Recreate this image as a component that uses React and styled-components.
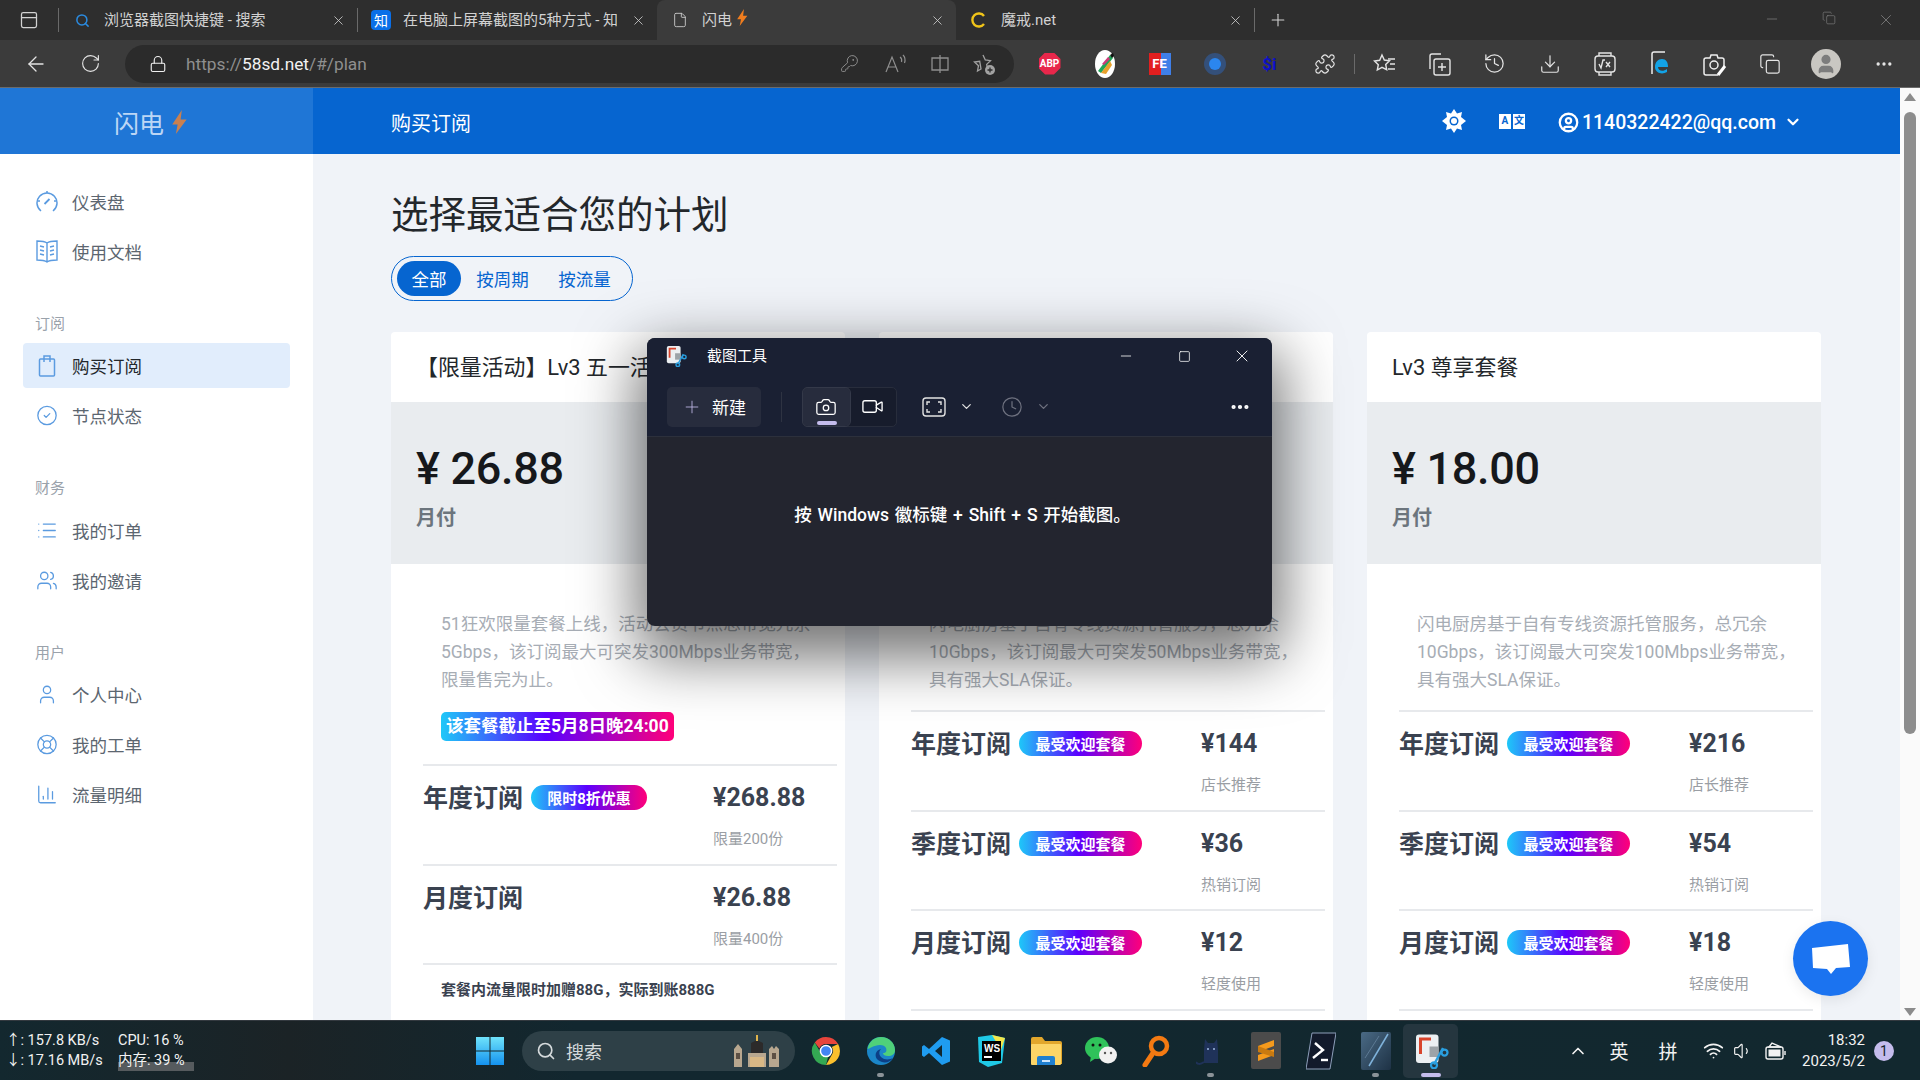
import React from 'react'
import styled, { createGlobalStyle } from 'styled-components'
import {
  ArrowLeft, RotateCw, Lock, KeyRound, Puzzle, History, Download, Ellipsis, Copy, Plus, X, Minus,
  Camera, Video, Clock, ChevronDown, ChevronUp, CircleUser, Search, Wifi, Volume1, File, Square,
  CircleCheck, List, Users, User, LifeBuoy, ChartColumn, PanelTop, Copy as Restore
} from 'lucide-react'

const FONT = `Roboto, "Noto Sans CJK SC", sans-serif`

const GlobalStyle = createGlobalStyle`
  html, body { margin: 0; padding: 0; background: #f0f3f8; }
  * { box-sizing: border-box; }
  body { font-family: ${FONT}; }
`

const Screen = styled.div`
  position: relative;
  width: 1920px;
  height: 1080px;
  overflow: hidden;
  display: flex;
  flex-direction: column;
`

/* browser chrome */
const TabBar = styled.div`
  height: 40px;
  flex: none;
  display: flex;
  align-items: center;
  background: #2e2e2e;
  color: #d2d2d2;
`
const TabMenu = styled.div`
  width: 59px;
  height: 24px;
  display: flex;
  align-items: center;
  justify-content: center;
  border-right: 1px solid #6a6a6a;
`
const Tab = styled.div`
  width: 299px;
  height: ${p => (p.$active ? '40px' : '24px')};
  padding: 0 11px 0 15px;
  display: flex;
  align-items: center;
  gap: 14px;
  font-size: 15px;
  background: ${p => (p.$active ? '#3b3b3b' : 'transparent')};
  border-radius: ${p => (p.$active ? '8px 8px 0 0' : '0')};
  border-right: ${p => (p.$active || p.$bare ? 'none' : '1px solid #6a6a6a')};
`
const TabIcon = styled.span`
  width: 16px;
  height: 16px;
  flex: none;
  display: flex;
  align-items: center;
  justify-content: center;
`
const ZhihuMark = styled(TabIcon)`
  width: 20px;
  height: 20px;
  margin-left: -2px;
  margin-right: -2px;
  background: #0a6fe8;
  border-radius: 4px;
  color: #fff;
  font-size: 14px;
`
const TabTitle = styled.span`
  flex: 1;
  min-width: 0;
  height: 22px;
  line-height: 22px;
  overflow: hidden;
  white-space: nowrap;
  display: flex;
  align-items: flex-start;
  gap: 5px;
`
const NewTab = styled.div`
  width: 46px;
  display: flex;
  justify-content: center;
`
const WindowButtons = styled.div`
  margin-left: auto;
  display: flex;
  color: #8a8a8a;
  padding-right: 6px;
`
const WindowButton = styled.div`
  width: 57px;
  display: flex;
  justify-content: center;
`
const ToolBar = styled.div`
  height: 48px;
  flex: none;
  display: flex;
  align-items: center;
  padding-left: 8px;
  background: #3b3b3b;
  border-bottom: 1px solid #6b6b6b;
  color: #e4e4e4;
`
const ToolCell = styled.div`
  width: ${p => p.$w || 55}px;
  height: 38px;
  flex: none;
  display: flex;
  align-items: center;
  justify-content: center;
`
const ToolDivider = styled.div`
  width: 1px;
  height: 20px;
  margin: 0 2px;
  flex: none;
  background: #6a6a6a;
`
const Address = styled.div`
  width: 889px;
  height: 38px;
  margin: 0 8px 0 7px;
  padding: 0 7px 0 24px;
  flex: none;
  display: flex;
  align-items: center;
  border-radius: 19px;
  background: #2b2b2b;
  color: #8f8f8f;
`
const Url = styled.div`
  flex: 1;
  margin-left: 19px;
  font-size: 17.3px;
  b { font-weight: 400; color: #f2f2f2; }
`
const Badge = styled.span`
  width: 22px;
  height: 22px;
  display: flex;
  align-items: center;
  justify-content: center;
  font-size: ${p => p.$size || 10}px;
  font-weight: 700;
  color: ${p => p.$color || '#fff'};
  background: ${p => p.$bg || 'transparent'};
  border-radius: ${p => p.$radius || '0'};
  clip-path: ${p => p.$clip || 'none'};
`
const BlueDot = styled.span`
  width: 12px;
  height: 12px;
  border-radius: 50%;
  background: #2b86ee;
`
const Avatar = styled.div`
  width: 30px;
  height: 30px;
  border-radius: 50%;
  background: #c9c7c2;
  color: #7d7d7d;
  display: flex;
  align-items: center;
  justify-content: center;
`

/* site */
const Viewport = styled.div`
  flex: 1;
  min-height: 0;
  display: flex;
`
const PageColumn = styled.div`
  position: relative;
  flex: 1;
  min-width: 0;
  display: flex;
  flex-direction: column;
`
const Header = styled.header`
  height: 66px;
  flex: none;
  display: flex;
  align-items: center;
  background: #0665d0;
  color: #fff;
`
const Brand = styled.div`
  width: 313px;
  height: 100%;
  padding: 2px 0 0 114px;
  display: flex;
  align-items: center;
  gap: 8px;
  background: #1f76d6;
  color: #bcd6f5;
  font-size: 25px;
`
const HeaderTitle = styled.div`
  margin-left: 78px;
  padding-top: 2px;
  font-size: 20px;
`
const HeaderTools = styled.div`
  margin-left: auto;
  padding-right: 98px;
  display: flex;
  align-items: center;
`
const HeaderIcon = styled.div`
  width: 58px;
  display: flex;
  justify-content: center;
`
const LangMark = styled.span`
  width: 26px;
  height: 15px;
  display: grid;
  grid-template-columns: 1fr 1fr;
  column-gap: 2px;
`
const LangCell = styled.span`
  display: flex;
  align-items: center;
  justify-content: center;
  background: #fff;
  color: #0665d0;
  font-size: 10px;
  font-weight: 700;
  line-height: 1;
`
const Account = styled.div`
  display: flex;
  align-items: center;
  gap: 3px;
  margin-left: 17px;
  padding-top: 2px;
  font-size: 19.5px;
  font-weight: 500;
`
const AccountCaret = styled.span`
  display: flex;
  margin-left: 5px;
`
const Body = styled.div`
  flex: 1;
  min-height: 0;
  display: flex;
`
const Sidebar = styled.nav`
  width: 313px;
  flex: none;
  padding: 24.5px 23px 0;
  background: #fff;
`
const NavItem = styled.div`
  height: 45px;
  margin-bottom: 5px;
  padding-left: 13px;
  display: flex;
  align-items: center;
  gap: 14px;
  border-radius: 4px;
  font-size: 17.5px;
  color: ${p => (p.$active ? '#23272b' : '#5c6670')};
  background: ${p => (p.$active ? '#e1edfc' : 'transparent')};
`
const NavIcon = styled.span`
  width: 22px;
  height: 24px;
  flex: none;
  display: flex;
  align-items: center;
  justify-content: center;
  color: #5b9be0;
`
const NavLabel = styled.div`
  height: 23px;
  margin: 39px 0 7.5px 12px;
  font-size: 15px;
  line-height: 23px;
  color: #9aa2ab;
`
const Main = styled.main`
  flex: 1;
  min-width: 0;
  padding: 35px 0 0 78px;
  overflow: hidden;
  background: #f0f3f8;
`
const PageTitle = styled.h1`
  margin: 0;
  height: 52px;
  font-size: 37.5px;
  line-height: 52px;
  font-weight: 400;
  color: #23272b;
`
const Segmented = styled.div`
  width: 242px;
  height: 45px;
  margin-top: 15px;
  padding: 0 5px;
  display: flex;
  align-items: center;
  border: 1px solid #0665d0;
  border-radius: 23px;
`
const Segment = styled.div`
  width: ${p => (p.$active ? 64 : 83)}px;
  height: 35px;
  margin-right: ${p => (p.$active ? 0 : -1)}px;
  display: flex;
  align-items: center;
  justify-content: center;
  border-radius: 18px;
  font-size: 17.5px;
  color: ${p => (p.$active ? '#fff' : '#0665d0')};
  background: ${p => (p.$active ? '#0665d0' : 'transparent')};
`
const Cards = styled.div`
  margin-top: 31px;
  display: grid;
  grid-template-columns: repeat(3, 454px);
  column-gap: 34px;
`
const Card = styled.article`
  background: #fff;
  border-radius: 4px;
`
const CardTitle = styled.div`
  height: 70px;
  padding: 0 0 3px 25px;
  display: flex;
  align-items: center;
  font-size: 21.9px;
  color: #23272b;
`
const PriceBlock = styled.div`
  height: 162px;
  padding: 33px 25px 0;
  background: #e9ecef;
`
const BigPrice = styled.div`
  font-size: 45px;
  line-height: 68px;
  font-weight: 500;
  letter-spacing: -.3px;
  color: #16181b;
`
const Cycle = styled.div`
  font-size: 20px;
  line-height: 30px;
  font-weight: 700;
  color: #6c757d;
`
const CardBody = styled.div`
  padding: 46px 8px 60px 32px;
`
const Desc = styled.p`
  margin: 0 0 0 18px;
  font-size: 17.5px;
  line-height: 28px;
  color: #a7adb5;
`
const Deadline = styled.div`
  display: inline-block;
  margin: 18px 0 0 18px;
  padding: 0 5px;
  height: 29px;
  line-height: 29px;
  border-radius: 5px;
  font-size: 17.5px;
  font-weight: 700;
  white-space: nowrap;
  color: #fff;
  background: linear-gradient(90deg, #1ec8f8, #5a00ff 45%, #ff007a);
`
const Plans = styled.div`
  margin-top: ${p => p.$gap}px;
  border-bottom: 2px solid #e7e9ec;
`
const PlanRow = styled.div`
  height: 99.7px;
  padding-top: 14px;
  display: grid;
  grid-template-columns: 290px 1fr;
  border-top: 2px solid #e7e9ec;
`
const PlanName = styled.div`
  height: 35px;
  display: flex;
  align-items: center;
  gap: 8px;
  font-size: 25px;
  font-weight: 700;
  color: #3a4250;
`
const PlanNameText = styled.span`
  margin-top: -3px;
`
const Tag = styled.span`
  height: 25px;
  width: ${p => p.$w || 123}px;
  display: flex;
  align-items: center;
  justify-content: center;
  border-radius: 13px;
  font-size: 15px;
  font-weight: 700;
  color: #fff;
  background: linear-gradient(90deg, #1ec8f8, #5a00ff 48%, #ff007a);
`
const PlanPrice = styled.div`
  height: 35px;
  line-height: 35px;
  font-size: 25px;
  font-weight: 700;
  color: #3a4250;
`
const PlanSub = styled.div`
  margin-top: 12px;
  font-size: 15px;
  line-height: 25px;
  color: #9a9ea4;
`
const Note = styled.div`
  margin-left: 18px;
  padding-top: 14px;
  font-size: 15px;
  line-height: 22px;
  font-weight: 700;
  color: #3a4250;
`
const ChatButton = styled.div`
  position: absolute;
  right: 32px;
  bottom: 24px;
  width: 75px;
  height: 75px;
  border-radius: 50%;
  display: flex;
  align-items: center;
  justify-content: center;
  background: #1b73f0;
  box-shadow: 0 4px 14px rgba(0, 0, 0, .08);
`
const Scrollbar = styled.div`
  position: relative;
  width: 20px;
  flex: none;
  padding-top: 24px;
  display: flex;
  justify-content: center;
  background: #fafafa;
`
const ScrollThumb = styled.div`
  width: 12px;
  height: 622px;
  border-radius: 6px;
  background: #8c8c8c;
`
const ScrollArrow = styled.div`
  position: absolute;
  left: 4px;
  width: 0;
  height: 0;
  border-left: 6px solid transparent;
  border-right: 6px solid transparent;
  ${p => (p.$down
    ? 'bottom: 4px; border-top: 8px solid #8c8c8c;'
    : 'top: 5px; border-bottom: 8px solid #8c8c8c;')}
`

/* snipping tool */
const SnipWindow = styled.section`
  position: absolute;
  left: 647px;
  top: 338px;
  width: 625px;
  height: 288px;
  border-radius: 8px;
  display: flex;
  flex-direction: column;
  color: #fff;
  background: #23252f;
  box-shadow: 0 22px 60px 10px rgba(0, 0, 0, .55);
`
const SnipTitleBar = styled.div`
  height: 36px;
  flex: none;
  display: flex;
  align-items: center;
  padding-left: 18px;
  border-radius: 8px 8px 0 0;
  background: #1a2033;
  font-size: 15px;
`
const SnipTitle = styled.span`
  margin-left: 20px;
  padding-bottom: 3px;
`
const SnipControls = styled.div`
  margin-left: auto;
  display: flex;
  padding-right: 1px;
`
const SnipControl = styled.div`
  width: 58px;
  display: flex;
  align-items: center;
  justify-content: center;
`
const SnipTools = styled.div`
  height: 63px;
  flex: none;
  padding: 13px 20px 10px;
  display: flex;
  align-items: center;
  background: #1a2033;
  border-bottom: 1px solid #2c303c;
`
const NewButton = styled.div`
  width: 94px;
  height: 40px;
  display: flex;
  align-items: center;
  justify-content: center;
  gap: 10px;
  border-radius: 5px;
  background: #272c3d;
  font-size: 17px;
`
const SnipDivider = styled.div`
  width: 1px;
  height: 30px;
  margin: 0 20px;
  background: #2e3342;
`
const ModeSwitch = styled.div`
  width: 95px;
  height: 40px;
  display: flex;
  border: 1px solid #282d3c;
  border-radius: 5px;
  background: #171c2c;
`
const Mode = styled.div`
  position: relative;
  width: 47px;
  display: flex;
  align-items: center;
  justify-content: center;
  border-radius: 5px;
  background: ${p => (p.$active ? '#272c3d' : 'transparent')};
  outline: ${p => (p.$active ? '1px solid #343949' : 'none')};
`
const ModeMark = styled.span`
  position: absolute;
  left: 14px;
  bottom: 1px;
  width: 20px;
  height: 4px;
  border-radius: 2px;
  background: #c4bcec;
`
const SnipPicker = styled.div`
  margin-left: ${p => p.$m}px;
  display: flex;
  align-items: center;
  gap: ${p => p.$gap}px;
  color: ${p => (p.$dim ? '#6f7280' : '#e2e2e2')};
`
const SnipMore = styled.div`
  margin-left: auto;
  margin-right: 1px;
  display: flex;
`
const SnipMessage = styled.div`
  padding: 64px 0 0 6px;
  text-align: center;
  font-size: 17.5px;
  line-height: 28px;
  font-weight: 500;
  word-spacing: 1.5px;
`

/* windows taskbar */
const Taskbar = styled.footer`
  height: 60px;
  flex: none;
  display: flex;
  align-items: center;
  border-top: 1px solid #33393f;
  background: linear-gradient(90deg, #13282f 0%, #1b2326 15%, #12272f 30%, #12282f 100%);
  color: #f2f2f2;
`
const Stats = styled.div`
  width: 462px;
  flex: none;
  padding-left: 6px;
  display: grid;
  grid-template-columns: 112px 76px;
  grid-auto-rows: 20px;
  font-size: 14.5px;
  line-height: 20px;
  white-space: nowrap;
`
const MemStat = styled.span`
  background: linear-gradient(180deg, transparent 55%, #565b5e 55%);
`
const TaskCell = styled.div`
  position: relative;
  width: 55px;
  height: 54px;
  flex: none;
  display: flex;
  align-items: center;
  justify-content: center;
  border-radius: 5px;
  background: ${p => (p.$active ? '#25363f' : 'transparent')};
`
const RunDot = styled.span`
  position: absolute;
  bottom: 1px;
  left: 50%;
  width: ${p => (p.$active ? 20 : 7)}px;
  height: 4px;
  margin-left: ${p => (p.$active ? -10 : -3.5)}px;
  border-radius: 2px;
  background: ${p => (p.$active ? '#c4bcec' : '#8b9398')};
`
const SearchBox = styled.div`
  width: 273px;
  height: 40px;
  margin: 0 3px 0 5px;
  padding: 0 10px 0 14px;
  flex: none;
  display: flex;
  align-items: center;
  gap: 10px;
  border-radius: 20px;
  background: #2e4047;
  font-size: 18px;
  color: #d5dadc;
`
const SearchArt = styled.span`
  margin-left: auto;
  display: flex;
`
const Tray = styled.div`
  flex: 1;
  display: flex;
  align-items: center;
  padding-left: 110px;
`
const TrayCell = styled.div`
  width: ${p => p.$w}px;
  margin-right: ${p => p.$m || 0}px;
  display: flex;
  justify-content: center;
  font-size: 19px;
`
const SysClock = styled.div`
  width: 76px;
  margin-left: 3px;
  text-align: right;
  font-size: 15px;
  line-height: 21px;
`
const Notice = styled.div`
  width: 20px;
  height: 20px;
  margin-left: 9px;
  display: flex;
  align-items: center;
  justify-content: center;
  border-radius: 50%;
  background: #c4bcec;
  color: #17242b;
  font-size: 14px;
`

const Bolt = ({ size = 20, color = '#f07d1e' }) => (
  <svg width={size * 0.62} height={size} viewBox="0 0 12 20"><path d="M8 0 0 12h4.500L3 20l9-12H7z" fill={color} /></svg>
)
const SnipLogo = ({ size = 22 }) => (
  <svg width={size} height={size} viewBox="0 0 24 24">
    <rect x="2" y="1" width="15" height="19" rx="2" fill="#eceff2" />
    <path d="M4 3h8v2H6v9H4z" fill="#d8442c" />
    <rect x="11" y="9" width="6" height="7" fill="#9da3a8" />
    <path d="m14 21 6-11" stroke="#2a9fe0" strokeWidth="1.6" />
    <circle cx="14" cy="21.5" r="2" fill="none" stroke="#2a9fe0" strokeWidth="1.5" />
    <circle cx="21" cy="13" r="2" fill="none" stroke="#2a9fe0" strokeWidth="1.5" />
  </svg>
)
const WinLogo = () => (
  <svg width="30" height="30" viewBox="0 0 30 30">
    <defs><linearGradient id="w" x1="0" y1="0" x2="0" y2="1"><stop offset="0" stopColor="#6fe3fb" /><stop offset="1" stopColor="#1492ef" /></linearGradient></defs>
    <path d="M1 1h13.5v13.5H1zM15.5 1H29v13.5H15.5zM1 15.5h13.5V29H1zM15.5 15.5H29V29H15.5z" fill="url(#w)" />
  </svg>
)
const ChromeLogo = () => (
  <svg width="30" height="30" viewBox="0 0 30 30">
    <path d="M15 1a14 14 0 0 1 12.1 7H15a7 7 0 0 0-6.6 4.6L3.8 6.5A14 14 0 0 1 15 1z" fill="#e8453c" />
    <path d="M27.1 8A14 14 0 0 1 15 29l6-10.4a7 7 0 0 0-.2-7.6z" fill="#fbc02d" />
    <path d="M15 29A14 14 0 0 1 3.8 6.5L9.7 17a7 7 0 0 0 7.5 3.5z" fill="#34a853" />
    <circle cx="15" cy="15" r="5.6" fill="#4285f4" stroke="#fff" strokeWidth="1.5" />
  </svg>
)
const EdgeLogo = ({ size = 30 }) => (
  <svg width={size} height={size} viewBox="0 0 30 30">
    <circle cx="15" cy="15" r="14" fill="#1b86c8" />
    <path d="M1.5 13C3 5 9 1 15 1c8 0 14 6 14 13 0 4-3 6-7 6-3 0-5-1-5-3 3 0 4-2 3-5-1-2-3-3-6-3-6 0-11 4-12.5 4z" fill="#4fd07a" />
    <path d="M12 24c-4-3-3-10 3-11-3 3-2 8 3 10 4 1 7 0 9-1-3 5-10 6-15 2z" fill="#0c3f86" />
  </svg>
)
const VSCodeLogo = () => (
  <svg width="30" height="30" viewBox="0 0 30 30">
    <path d="M21 1 29 4.500v21L21 29 8 17l-5 4-2-1.500V10.500L3 9l5 4zM21 9l-7 6 7 6z" fill="#1f9cf0" />
  </svg>
)
const WSLogo = () => (
  <svg width="30" height="32" viewBox="0 0 30 32">
    <path d="M2 2 16 0l13 3-3 25-14 4L3 27z" fill="#1fc9e6" />
    <path d="M16 0l13 3-4 12z" fill="#f4e64a" />
    <rect x="6" y="6" width="19" height="20" fill="#000" />
    <text x="8" y="17" fill="#fff" fontSize="10" fontWeight="700" fontFamily="Liberation Sans">WS</text>
    <rect x="8" y="21" width="8" height="2" fill="#fff" />
  </svg>
)
const FolderLogo = () => (
  <svg width="32" height="30" viewBox="0 0 32 30">
    <path d="M1 3a2 2 0 0 1 2-2h9l3 4h15a2 2 0 0 1 2 2v21H1z" fill="#e2a72c" />
    <rect x="1" y="8" width="30" height="21" rx="1" fill="#fcd567" />
    <path d="M9 20h14a2 2 0 0 1 2 2v7H7v-7a2 2 0 0 1 2-2z" fill="#1f80d0" />
    <rect x="12" y="24" width="8" height="2" fill="#cde7ff" />
  </svg>
)
const WeChatLogo = () => (
  <svg width="32" height="30" viewBox="0 0 32 30">
    <ellipse cx="12" cy="12" rx="12" ry="11" fill="#2fc25a" />
    <path d="M6 20 5 26l6-4z" fill="#2fc25a" />
    <ellipse cx="23" cy="19" rx="9" ry="8.500" fill="#f1f1f1" />
    <circle cx="8" cy="9" r="1.500" fill="#111" /><circle cx="15" cy="9" r="1.500" fill="#111" />
    <circle cx="20" cy="17" r="1.200" fill="#555" /><circle cx="26" cy="17" r="1.200" fill="#555" />
  </svg>
)
const OrangeSearch = () => (
  <svg width="30" height="32" viewBox="0 0 30 32" fill="none">
    <circle cx="18" cy="11" r="8" stroke="#f47a12" strokeWidth="4.500" />
    <path d="M12 18 4 30" stroke="#f47a12" strokeWidth="5" strokeLinecap="round" />
  </svg>
)
const CatLogo = () => (
  <svg width="30" height="32" viewBox="0 0 30 32">
    <path d="M9 4l3 4h6l3-4 1 10v14H8V14z" fill="#1f3259" />
    <path d="M8 27C4 30 1 29 0 27" stroke="#1f3259" strokeWidth="2" fill="none" />
    <circle cx="12" cy="14" r="1" fill="#9fb8e0" /><circle cx="18" cy="14" r="1" fill="#9fb8e0" />
  </svg>
)
const SublimeLogo = () => (
  <svg width="30" height="37" viewBox="0 0 30 37">
    <rect width="30" height="37" rx="2" fill="#4b4b4b" />
    <path d="M7 14 23 8v6L7 20zM23 17 7 23v6l16-6z" fill="#f59a1c" />
    <path d="M7 14 23 20v5L7 20z" fill="#c97a10" />
  </svg>
)
const TermLogo = () => (
  <svg width="30" height="38" viewBox="0 0 30 38">
    <path d="M6 1h24l-6 36H0z" fill="#121a2b" stroke="#8ea0bb" />
    <path d="m9 11 8 7-10 8" stroke="#fff" strokeWidth="2.400" fill="none" />
    <path d="M15 28h7" stroke="#fff" strokeWidth="2.400" />
  </svg>
)
const PictureLogo = () => (
  <svg width="30" height="38" viewBox="0 0 30 38">
    <defs><linearGradient id="p" x1="0" y1="0" x2="1" y2="1"><stop offset="0" stopColor="#4a6a85" /><stop offset="1" stopColor="#1e3245" /></linearGradient></defs>
    <rect width="30" height="38" rx="2" fill="url(#p)" />
    <path d="M27 2 8 34" stroke="#7fb2da" strokeWidth="1.500" />
    <path d="M18 4 4 26" stroke="#5d7a94" strokeWidth="1" />
  </svg>
)
const CityArt = () => (
  <svg width="54" height="32" viewBox="0 0 54 32">
    <path d="M3 32V14l4-5 4 5v18zM17 32V18h18v14zM38 32V14l3-3 2 3 2-3 3 3v18z" fill="#b8a78f" />
    <path d="M20 18V8l6-3 6 3v10z" fill="#2c2a2a" />
    <path d="M26 0v6" stroke="#e0b44c" strokeWidth="2" />
    <path d="M19 22h14v10H19z" fill="#d9b885" />
    <path d="M5 18h4v6H5zM41 18h4v6h-4z" fill="#5d5044" />
  </svg>
)
const PaintLogo = () => (
  <svg width="22" height="30" viewBox="0 0 22 30">
    <ellipse cx="11" cy="15" rx="10" ry="14" fill="#fff" />
    <path d="M4 22 16 6l3 3L7 24z" fill="#22a559" />
    <path d="M7 24 16 12l2 4-6 9z" fill="#e8a12d" />
    <path d="M8 15 14 8l2 2-6 6z" fill="#d03a7b" />
    <path d="M16 6l3-2 1 3-2 2z" fill="#111" />
  </svg>
)
const LinkedEdge = () => (
  <svg width="24" height="28" viewBox="0 0 24 28" fill="none">
    <path d="M4 24V4a2 2 0 0 1 2-2h11" stroke="#eee" strokeWidth="1.500" />
    <path d="M7 17c0-5 3-8 7-8s6 3 6 8H10c0 4 5 5 9 2v3c-5 3-12 1-12-5z" fill="#13a3e6" />
  </svg>
)
const SnipCamera = () => (
  <svg width="24" height="26" viewBox="0 0 24 26" fill="none" stroke="#eee" strokeWidth="1.500">
    <path d="M3 7h4l1-3h6l1 3h4a2 2 0 0 1 2 2v6M15 24H3a2 2 0 0 1-2-2V9a2 2 0 0 1 2-2" />
    <circle cx="11" cy="14" r="4" />
    <path d="m15 24 7-9" stroke="#fff" strokeWidth="3" />
  </svg>
)
const WatchFx = () => (
  <svg width="24" height="26" viewBox="0 0 24 26" fill="none" stroke="#e4e4e4" strokeWidth="1.400">
    <rect x="2" y="5" width="20" height="16" rx="3" />
    <path d="M6 5V2h12v3M6 21v3h12v-3" />
    <path d="m6 13 2 4 2-8h2M13 11l4 5M17 11l-4 5" />
  </svg>
)
const SunBadge = () => (
  <svg width="24" height="24" viewBox="0 0 24 24">
    <path fill="#fff" d="m12 0 3 4.500 5-1.500-1 5 5 4-5 4 1 5-5-1.500L12 24l-3-4.500L4 21l1-5-5-4 5-4-1-5 5 1.500z" />
    <circle cx="12" cy="12" r="4.500" fill="#0665d0" />
    <circle cx="12" cy="12" r="3" fill="#fff" />
  </svg>
)
const BubbleIcon = () => (
  <svg width="38" height="32" viewBox="0 0 38 32"><path d="M0 5 36 1l2 23-14 1-5 6-4-5-14-1z" fill="#fff" /></svg>
)
const FavList = () => (
  <svg width="24" height="24" viewBox="0 0 24 24" fill="none" stroke="#e4e4e4" strokeWidth="1.400">
    <path d="m9 3 2.300 5 5.200.700-3.800 3.700 1 5.300L9 15.300 4.300 18l1-5.300L1.500 9l5.200-.700z" />
    <path d="M15 7h7M17 12h5M15 17h7" />
  </svg>
)
const Collections = () => (
  <svg width="24" height="26" viewBox="0 0 24 26" fill="none" stroke="#e4e4e4" strokeWidth="1.400">
    <path d="M2 18V5a2 2 0 0 1 2-2h9" />
    <rect x="6" y="8" width="16" height="16" rx="2" />
    <path d="M14 12v8M10 16h8" />
  </svg>
)
const Split = () => (
  <svg width="20" height="20" viewBox="0 0 20 20" fill="none" stroke="currentColor" strokeWidth="1.300">
    <path d="M2 4h16v12H2zM10 1v18" />
  </svg>
)
const AddFav = () => (
  <svg width="24" height="24" viewBox="0 0 24 24" fill="none" stroke="#a2a2a2" strokeWidth="1.300">
    <path d="m10 3 2.300 5 5.200.700-3.800 3.700.500 2.800M8 17l-3.500 2 1-5.300L1.500 10l5.200-.700z" />
    <circle cx="17" cy="18" r="5" fill="#a2a2a2" stroke="none" />
    <path d="M17 15.500v5M14.500 18h5" stroke="#2b2b2b" />
  </svg>
)
const ReadAloud = () => (
  <svg width="24" height="24" viewBox="0 0 24 24" fill="none" stroke="currentColor" strokeWidth="1.200">
    <path d="m3 20 6-15 6 15M5.500 15h7M17 5c1.500 1 2 3 1.500 5M20 3c2 2 2.500 5 1.500 8" />
  </svg>
)
const ClipBag = () => (
  <svg width="18" height="24" viewBox="0 0 18 24" fill="none" stroke="currentColor" strokeWidth="1.500">
    <rect x="1.500" y="5" width="15" height="17" rx="1" />
    <path d="M6 8V2h6v6" />
  </svg>
)
const GaugeRing = () => (
  <svg width="22" height="24" viewBox="0 0 22 24" fill="none" stroke="currentColor" strokeWidth="1.500">
    <path d="M5 22a10 10 0 1 1 12 0" />
    <path d="m8.500 15 5-5" strokeWidth="1.800" />
    <path d="M11 2v2M2 12h2M18 12h2" />
  </svg>
)
const LinedBook = () => (
  <svg width="22" height="24" viewBox="0 0 22 24" fill="none" stroke="currentColor" strokeWidth="1.400">
    <path d="M1 2c4 0 8 .500 10 2 2-1.500 6-2 10-2v19c-4 0-8 .500-10 2-2-1.500-6-2-10-2zM11 4v19" />
    <path d="M4 7l4 1M4 11l4 1M4 15l4 1M18 7l-4 1M18 11l-4 1M18 15l-4 1" />
  </svg>
)
const Battery = () => (
  <svg width="22" height="22" viewBox="0 0 22 22" fill="none" stroke="#f2f2f2" strokeWidth="1.400">
    <rect x="2" y="7" width="17" height="12" rx="2" />
    <path d="M5 7 8 3l9 4zM21 11v4" />
    <rect x="4.500" y="9.500" width="12" height="7" fill="#f2f2f2" stroke="none" />
  </svg>
)
const CaptureFrame = () => (
  <svg width="24" height="22" viewBox="0 0 24 22" fill="none" stroke="currentColor" strokeWidth="1.400">
    <rect x="1" y="2" width="22" height="18" rx="3" />
    <path d="M5 9V6h3M16 6h3v3M19 13v3h-3M8 16H5v-3" />
  </svg>
)

const navTop = [
  { icon: <GaugeRing />, label: '仪表盘' },
  { icon: <LinedBook />, label: '使用文档' }
]
const navBuy = [
  { icon: <ClipBag />, label: '购买订阅', active: true },
  { icon: <CircleCheck size={23} strokeWidth={1.4} />, label: '节点状态' }
]
const navMoney = [
  { icon: <List size={23} strokeWidth={1.4} />, label: '我的订单' },
  { icon: <Users size={23} strokeWidth={1.4} />, label: '我的邀请' }
]
const navUser = [
  { icon: <User size={23} strokeWidth={1.4} />, label: '个人中心' },
  { icon: <LifeBuoy size={23} strokeWidth={1.4} />, label: '我的工单' },
  { icon: <ChartColumn size={23} strokeWidth={1.4} />, label: '流量明细' }
]

const hot = '最受欢迎套餐'
const cards = [
  {
    title: '【限量活动】Lv3 五一活动限量套餐',
    price: '¥ 26.88',
    desc: ['51狂欢限量套餐上线，活动会员节点总带宽冗余', '5Gbps，该订阅最大可突发300Mbps业务带宽，', '限量售完为止。'],
    deadline: '该套餐截止至5月8日晚24:00',
    gap: 23,
    plans: [
      { name: '年度订阅', tag: '限时8折优惠', w: 116, price: '¥268.88', sub: '限量200份' },
      { name: '月度订阅', price: '¥26.88', sub: '限量400份' }
    ],
    note: '套餐内流量限时加赠88G，实际到账888G'
  },
  {
    title: 'Lv3 高级套餐',
    price: '¥ 9.00',
    desc: ['闪电厨房基于自有专线资源托管服务，总冗余', '10Gbps，该订阅最大可突发50Mbps业务带宽，', '具有强大SLA保证。'],
    gap: 16,
    plans: [
      { name: '年度订阅', tag: hot, price: '¥144', sub: '店长推荐' },
      { name: '季度订阅', tag: hot, price: '¥36', sub: '热销订阅' },
      { name: '月度订阅', tag: hot, price: '¥12', sub: '轻度使用' }
    ]
  },
  {
    title: 'Lv3 尊享套餐',
    price: '¥ 18.00',
    desc: ['闪电厨房基于自有专线资源托管服务，总冗余', '10Gbps，该订阅最大可突发100Mbps业务带宽，', '具有强大SLA保证。'],
    gap: 16,
    plans: [
      { name: '年度订阅', tag: hot, price: '¥216', sub: '店长推荐' },
      { name: '季度订阅', tag: hot, price: '¥54', sub: '热销订阅' },
      { name: '月度订阅', tag: hot, price: '¥18', sub: '轻度使用' }
    ]
  }
]

const taskApps = [
  { el: <ChromeLogo /> },
  { el: <EdgeLogo />, run: true },
  { el: <VSCodeLogo /> },
  { el: <WSLogo /> },
  { el: <FolderLogo /> },
  { el: <WeChatLogo /> },
  { el: <OrangeSearch /> },
  { el: <CatLogo />, run: true },
  { el: <SublimeLogo /> },
  { el: <TermLogo /> },
  { el: <PictureLogo />, run: true },
  { el: <SnipLogo size={36} />, active: true }
]

const NavGroup = ({ items }) => items.map(item => (
  <NavItem key={item.label} $active={item.active}><NavIcon>{item.icon}</NavIcon>{item.label}</NavItem>
))

const App = () => {
  return (
    <Screen>
      <GlobalStyle />
      <TabBar>
        <TabMenu><PanelTop size={20} strokeWidth={1.5} /></TabMenu>
        <Tab>
          <TabIcon><Search size={15} color="#2b8be0" strokeWidth={2.4} /></TabIcon>
          <TabTitle>浏览器截图快捷键 - 搜索</TabTitle>
          <X size={15} strokeWidth={1.3} />
        </Tab>
        <Tab $bare>
          <ZhihuMark>知</ZhihuMark>
          <TabTitle>在电脑上屏幕截图的5种方式 - 知乎</TabTitle>
          <X size={15} strokeWidth={1.3} />
        </Tab>
        <Tab $active>
          <TabIcon><File size={20} strokeWidth={1.3} /></TabIcon>
          <TabTitle>闪电 <Bolt size={17} /></TabTitle>
          <X size={15} strokeWidth={1.3} />
        </Tab>
        <Tab>
          <TabIcon><svg width="16" height="16" viewBox="0 0 16 16" fill="none"><path d="M13 4a6.500 6.500 0 1 0 0 8" stroke="#f0c419" strokeWidth="2.400" /></svg></TabIcon>
          <TabTitle>魔戒.net</TabTitle>
          <X size={15} strokeWidth={1.3} />
        </Tab>
        <NewTab><Plus size={20} strokeWidth={1.3} /></NewTab>
        <WindowButtons>
          <WindowButton><Minus size={16} strokeWidth={1} /></WindowButton>
          <WindowButton><Restore size={14} strokeWidth={1} /></WindowButton>
          <WindowButton><X size={18} strokeWidth={1} /></WindowButton>
        </WindowButtons>
      </TabBar>
      <ToolBar>
        <ToolCell><ArrowLeft size={24} strokeWidth={1.3} /></ToolCell>
        <ToolCell><RotateCw size={21} strokeWidth={1.3} /></ToolCell>
        <Address>
          <Lock size={18} strokeWidth={1.5} color="#f0f0f0" />
          <Url>https://<b>58sd.net</b>/#/plan</Url>
          <ToolCell $w={45}><KeyRound size={19} strokeWidth={1.2} /></ToolCell>
          <ToolCell $w={45}><ReadAloud /></ToolCell>
          <ToolCell $w={45}><Split /></ToolCell>
          <ToolCell $w={45}><AddFav /></ToolCell>
        </Address>
        <ToolCell><Badge $bg="#e8274b" $clip="polygon(30% 0, 70% 0, 100% 30%, 100% 70%, 70% 100%, 30% 100%, 0 70%, 0 30%)">ABP</Badge></ToolCell>
        <ToolCell><PaintLogo /></ToolCell>
        <ToolCell><Badge $bg="linear-gradient(90deg,#e21f1f 55%,#3f7fe8 55%)" $size={13}>FE</Badge></ToolCell>
        <ToolCell><Badge $bg="#34507a" $radius="50%"><BlueDot /></Badge></ToolCell>
        <ToolCell><Badge $color="#0c10c8" $size={17}>$i</Badge></ToolCell>
        <ToolCell><Puzzle size={22} strokeWidth={1.3} /></ToolCell>
        <ToolDivider />
        <ToolCell><FavList /></ToolCell>
        <ToolCell><Collections /></ToolCell>
        <ToolCell><History size={23} strokeWidth={1.3} /></ToolCell>
        <ToolCell><Download size={22} strokeWidth={1.3} /></ToolCell>
        <ToolCell><WatchFx /></ToolCell>
        <ToolCell><LinkedEdge /></ToolCell>
        <ToolCell><SnipCamera /></ToolCell>
        <ToolCell><Copy size={22} strokeWidth={1.3} /></ToolCell>
        <ToolCell $w={58}><Avatar><User size={22} fill="#7d7d7d" /></Avatar></ToolCell>
        <ToolCell $w={57}><Ellipsis size={20} /></ToolCell>
      </ToolBar>
      <Viewport>
        <PageColumn>
          <Header>
            <Brand>闪电 <Bolt size={24} color="#c98050" /></Brand>
            <HeaderTitle>购买订阅</HeaderTitle>
            <HeaderTools>
              <HeaderIcon><SunBadge /></HeaderIcon>
              <HeaderIcon>
                <LangMark>
                  <LangCell>A</LangCell>
                  <LangCell>文</LangCell>
                </LangMark>
              </HeaderIcon>
              <Account>
                <CircleUser size={21} strokeWidth={2.6} />
                1140322422@qq.com
                <AccountCaret><ChevronDown size={18} strokeWidth={3} /></AccountCaret>
              </Account>
            </HeaderTools>
          </Header>
          <Body>
            <Sidebar>
              <NavGroup items={navTop} />
              <NavLabel>订阅</NavLabel>
              <NavGroup items={navBuy} />
              <NavLabel>财务</NavLabel>
              <NavGroup items={navMoney} />
              <NavLabel>用户</NavLabel>
              <NavGroup items={navUser} />
            </Sidebar>
            <Main>
              <PageTitle>选择最适合您的计划</PageTitle>
              <Segmented>
                <Segment $active>全部</Segment>
                <Segment>按周期</Segment>
                <Segment>按流量</Segment>
              </Segmented>
              <Cards>
                {cards.map(card => (
                  <Card key={card.title}>
                    <CardTitle>{card.title}</CardTitle>
                    <PriceBlock>
                      <BigPrice>{card.price}</BigPrice>
                      <Cycle>月付</Cycle>
                    </PriceBlock>
                    <CardBody>
                      <Desc>{card.desc.map(line => <React.Fragment key={line}>{line}<br /></React.Fragment>)}</Desc>
                      {card.deadline && <Deadline>{card.deadline}</Deadline>}
                      <Plans $gap={card.gap}>
                        {card.plans.map(plan => (
                          <PlanRow key={plan.name}>
                            <PlanName>
                              <PlanNameText>{plan.name}</PlanNameText>
                              {plan.tag && <Tag $w={plan.w}>{plan.tag}</Tag>}
                            </PlanName>
                            <div>
                              <PlanPrice>{plan.price}</PlanPrice>
                              <PlanSub>{plan.sub}</PlanSub>
                            </div>
                          </PlanRow>
                        ))}
                      </Plans>
                      {card.note && <Note>{card.note}</Note>}
                    </CardBody>
                  </Card>
                ))}
              </Cards>
            </Main>
          </Body>
          <ChatButton><BubbleIcon /></ChatButton>
        </PageColumn>
        <Scrollbar>
          <ScrollArrow />
          <ScrollThumb />
          <ScrollArrow $down />
        </Scrollbar>
      </Viewport>
      <Taskbar>
        <Stats>
          <span>↑: 157.8 KB/s</span><span>CPU: 16 %</span>
          <span>↓: 17.16 MB/s</span><MemStat>内存: 39 %</MemStat>
        </Stats>
        <TaskCell><WinLogo /></TaskCell>
        <SearchBox>
          <Search size={20} strokeWidth={2} />
          搜索
          <SearchArt><CityArt /></SearchArt>
        </SearchBox>
        {taskApps.map((app, i) => (
          <TaskCell key={i} $active={app.active}>
            {app.el}
            {(app.run || app.active) && <RunDot $active={app.active} />}
          </TaskCell>
        ))}
        <Tray>
          <TrayCell $w={20} $m={20}><ChevronUp size={20} strokeWidth={2} /></TrayCell>
          <TrayCell $w={22} $m={27}>英</TrayCell>
          <TrayCell $w={22} $m={23}>拼</TrayCell>
          <TrayCell $w={22} $m={8}><Wifi size={21} /></TrayCell>
          <TrayCell $w={22} $m={10}><Volume1 size={20} strokeWidth={1.4} /></TrayCell>
          <TrayCell $w={22}><Battery /></TrayCell>
          <SysClock>18:32<br />2023/5/2</SysClock>
          <Notice>1</Notice>
        </Tray>
      </Taskbar>
      <SnipWindow>
        <SnipTitleBar>
          <SnipLogo />
          <SnipTitle>截图工具</SnipTitle>
          <SnipControls>
            <SnipControl><Minus size={16} strokeWidth={1.2} /></SnipControl>
            <SnipControl><Square size={13} strokeWidth={1.4} /></SnipControl>
            <SnipControl><X size={20} strokeWidth={1.1} /></SnipControl>
          </SnipControls>
        </SnipTitleBar>
        <SnipTools>
          <NewButton><Plus size={20} strokeWidth={1} color="#c4bcec" />新建</NewButton>
          <SnipDivider />
          <ModeSwitch>
            <Mode $active><Camera size={22} strokeWidth={1.4} /><ModeMark /></Mode>
            <Mode><Video size={23} strokeWidth={1.4} /></Mode>
          </ModeSwitch>
          <SnipPicker $m={25} $gap={13}><CaptureFrame /><ChevronDown size={15} /></SnipPicker>
          <SnipPicker $m={27} $gap={13} $dim><Clock size={22} strokeWidth={1.3} /><ChevronDown size={15} /></SnipPicker>
          <SnipMore><Ellipsis size={22} strokeWidth={2.6} /></SnipMore>
        </SnipTools>
        <SnipMessage>按 Windows 徽标键 + Shift + S 开始截图。</SnipMessage>
      </SnipWindow>
    </Screen>
  )
}

export default App
